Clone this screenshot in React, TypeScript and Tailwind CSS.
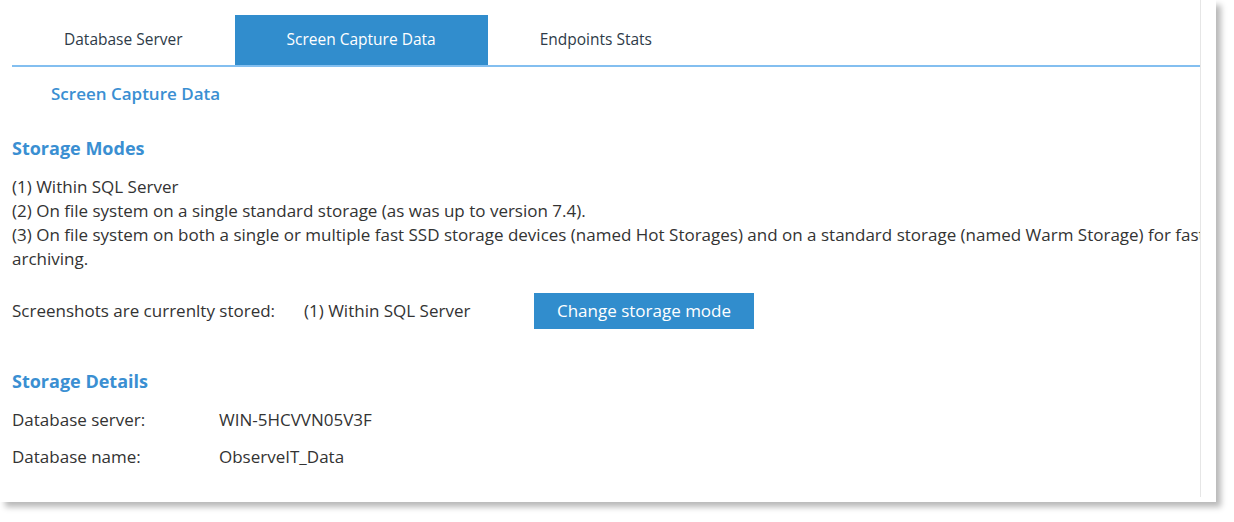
const tabs = ['Database Server', 'Screen Capture Data', 'Endpoints Stats']

function Tabs({ active }: { active: string }) {
    return (
        <div className="flex h-[52px] border-b-2 border-[#83bff0] text-[15.5px]">
            {tabs.map((t) => (
                <div
                    key={t}
                    className={
                        t === active
                            ? 'flex h-[50px] items-center bg-[#318dcd] px-[52px] text-white'
                            : 'flex h-[50px] items-center px-[52px] text-[#2e3b48]'
                    }>
                    {t}
                </div>
            ))}
        </div>
    )
}

export default function App() {
    return (
        <div className="h-[522px] w-[1234px] bg-white font-['Open_Sans',sans-serif] text-[17px] text-[#333]">
            <div className="h-[502px] w-[1216px] bg-white shadow-[5px_5px_6px_rgba(0,0,0,0.28)]">
                <div className="h-[497px] w-[1201px] overflow-hidden border-r border-[#e6e6e6]">
                    <div className="w-[1225px] pt-[15px] pl-[12px]">
                        <Tabs active="Screen Capture Data" />

                        <div className="mt-[15px] pl-[39px] leading-[24px] font-semibold text-[#3a8fd2]">
                            Screen Capture Data
                        </div>

                        <h2 className="mt-[29px] text-[18px] leading-[26px] font-bold text-[#3a8fd2]">
                            Storage Modes
                        </h2>
                        <div className="mt-[14px] leading-[24px]">
                            <p>(1) Within SQL Server</p>
                            <p>(2) On file system on a single standard storage (as was up to version 7.4).</p>
                            <p>
                                (3) On file system on both a single or multiple fast SSD storage devices
                                (named Hot Storages) and on a standard storage (named Warm Storage) for
                                faster archiving.
                            </p>
                        </div>

                        <div className="mt-[22px] flex h-[36px] items-center">
                            <span className="w-[292px]">Screenshots are currenlty stored:</span>
                            <span className="w-[230px]">(1) Within SQL Server</span>
                            <button className="h-[36px] w-[220px] bg-[#318dcd] text-white">
                                Change storage mode
                            </button>
                        </div>

                        <h2 className="mt-[39px] text-[18px] leading-[26px] font-bold text-[#3a8fd2]">
                            Storage Details
                        </h2>
                        <div className="mt-[14px] flex leading-[24px]">
                            <span className="w-[207px]">Database server:</span>
                            <span>WIN-5HCVVN05V3F</span>
                        </div>
                        <div className="mt-[13px] flex leading-[24px]">
                            <span className="w-[207px]">Database name:</span>
                            <span>ObserveIT_Data</span>
                        </div>
                    </div>
                </div>
            </div>
        </div>
    )
}
